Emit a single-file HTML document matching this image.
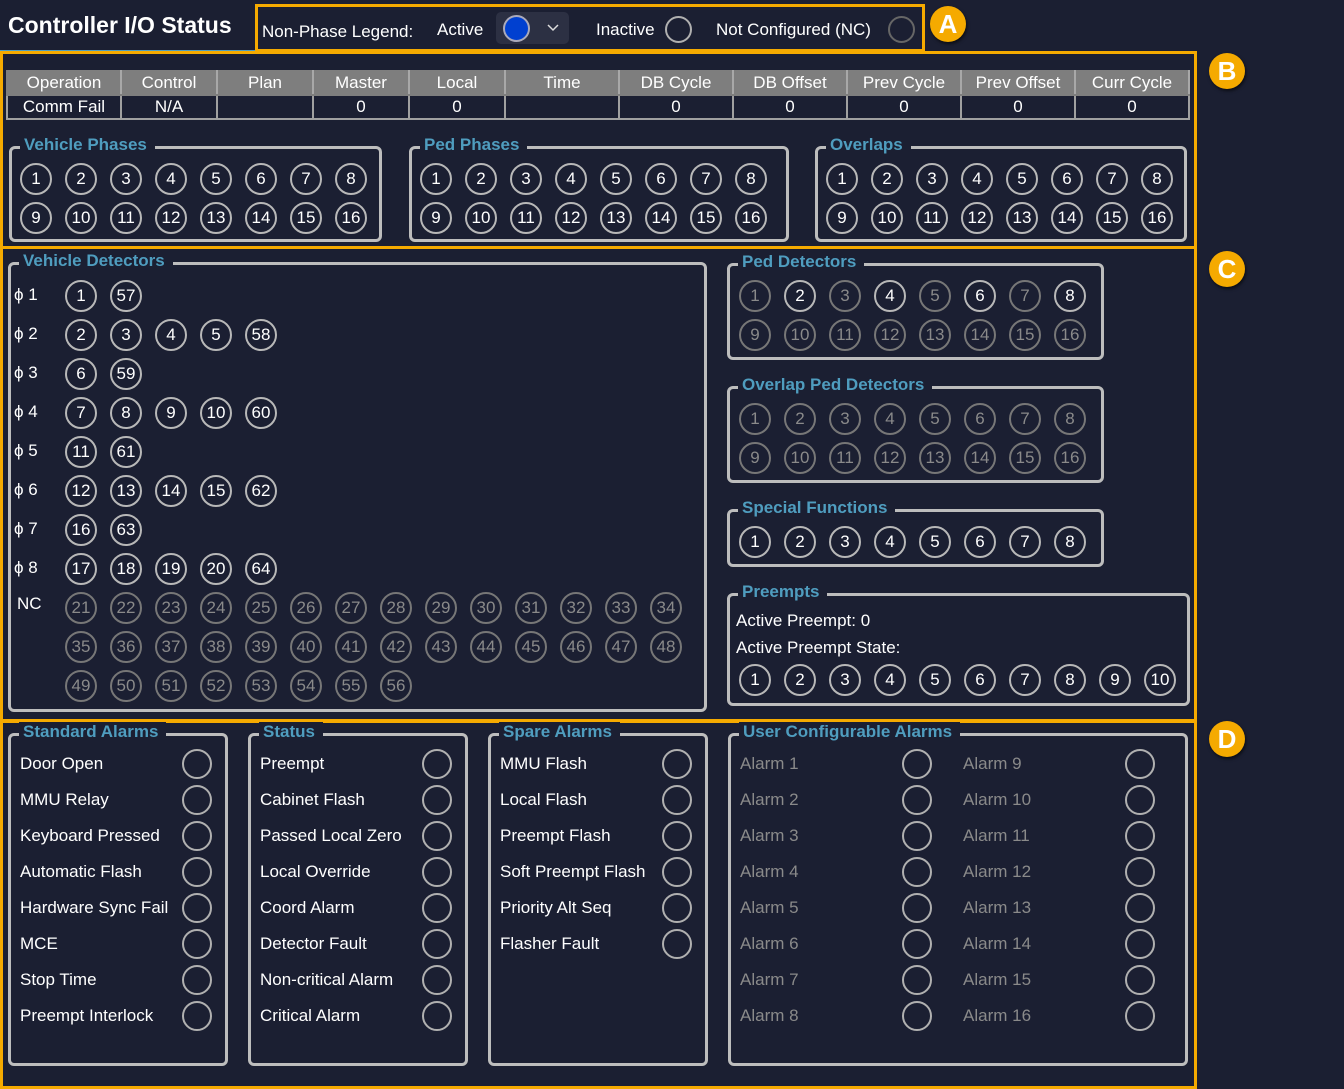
<!DOCTYPE html>
<html><head><meta charset="utf-8"><style>
*{box-sizing:border-box;margin:0;padding:0}
body{width:1344px;height:1083px;background:#1b1f32;font-family:"Liberation Sans",sans-serif;color:#fff;position:relative;overflow:hidden}
.a{position:absolute}
.ob{position:absolute;border:3px solid #f5aa00}
.g{position:absolute;border:3px solid #bdbdbd;border-radius:6px}
.t{position:absolute;top:-14px;left:8px;background:#1b1f32;padding:0 8px 0 4px;color:#4f9dbf;font-weight:bold;font-size:17px;line-height:20px}
.r{position:absolute;display:flex;gap:13px}
.r span{width:32px;height:32px;border:2px solid #b8b8b8;border-radius:50%;text-align:center;line-height:28px;font-size:17px;color:#fff;flex:none}
.r span.n,.r.n span{border-color:#777;color:#8a8a8a}
.lbl{position:absolute;font-size:17px;line-height:20px}
.ci{position:absolute;width:30px;height:30px;border:2px solid #b0b0b0;border-radius:50%}
.badge{position:absolute;width:36px;height:36px;border-radius:50%;background:#f5aa00;color:#fff;font-weight:bold;font-size:26px;text-align:center;line-height:36px;box-shadow:1px 2px 3px rgba(0,0,0,.6)}
table{position:absolute;left:6px;top:70px;border-collapse:collapse;font-size:17px}
td{border:2px solid #a0a0a0;text-align:center;height:24px;line-height:20px;padding:0}
tr.h td{background:#7e7e7e;color:#fff;border-color:#7e7e7e;border-right-color:#a8a8a8}
.gr{color:#8a8a8a}
</style></head><body>
<div class="a" style="left:8px;top:12px;font-size:23px;font-weight:bold">Controller I/O Status</div>
<div class="a" style="left:0;top:50px;width:545px;height:3px;background:#4f9dbf"></div>
<div class="ob" style="left:255px;top:4px;width:670px;height:48px"></div>
<div class="lbl" style="left:262px;top:22px">Non-Phase Legend:</div>
<div class="lbl" style="left:437px;top:20px">Active</div>
<div class="a" style="left:496px;top:12px;width:73px;height:32px;background:#2c3043;border-radius:5px"></div>
<div class="a" style="left:503px;top:15px;width:27px;height:27px;border-radius:50%;background:#0040d0;border:2px solid #aab"></div>
<svg class="a" style="left:547px;top:24px" width="12" height="8"><path d="M1 1 L6 6 L11 1" stroke="#ddd" stroke-width="1.5" fill="none"/></svg>
<div class="lbl" style="left:596px;top:20px">Inactive</div>
<div class="ci" style="left:665px;top:16px;width:27px;height:27px"></div>
<div class="lbl" style="left:716px;top:20px">Not Configured (NC)</div>
<div class="ci" style="left:888px;top:16px;width:27px;height:27px;border-color:#666"></div>
<div class="badge" style="left:930px;top:6px">A</div>
<div class="badge" style="left:1209px;top:53px">B</div>
<div class="badge" style="left:1209px;top:251px">C</div>
<div class="badge" style="left:1209px;top:721px">D</div>

<div class="ob" style="left:0;top:51px;width:1197px;height:198px"></div>
<div class="ob" style="left:0;top:246px;width:1197px;height:477px"></div>
<div class="ob" style="left:0;top:719px;width:1197px;height:370px"></div>

<table>
<tr class="h"><td style="width:114px">Operation</td><td style="width:96px">Control</td><td style="width:96px">Plan</td><td style="width:96px">Master</td><td style="width:96px">Local</td><td style="width:114px">Time</td><td style="width:114px">DB Cycle</td><td style="width:114px">DB Offset</td><td style="width:114px">Prev Cycle</td><td style="width:114px">Prev Offset</td><td style="width:114px">Curr Cycle</td></tr>
<tr><td>Comm Fail</td><td>N/A</td><td></td><td>0</td><td>0</td><td></td><td>0</td><td>0</td><td>0</td><td>0</td><td>0</td></tr>
</table>

<div class="g" style="left:9px;top:146px;width:373px;height:96px"><div class="t">Vehicle Phases</div></div>
<div class="r" style="left:20px;top:163px"><span>1</span><span>2</span><span>3</span><span>4</span><span>5</span><span>6</span><span>7</span><span>8</span></div>
<div class="r" style="left:20px;top:202px"><span>9</span><span>10</span><span>11</span><span>12</span><span>13</span><span>14</span><span>15</span><span>16</span></div>
<div class="g" style="left:409px;top:146px;width:380px;height:96px"><div class="t">Ped Phases</div></div>
<div class="r" style="left:420px;top:163px"><span>1</span><span>2</span><span>3</span><span>4</span><span>5</span><span>6</span><span>7</span><span>8</span></div>
<div class="r" style="left:420px;top:202px"><span>9</span><span>10</span><span>11</span><span>12</span><span>13</span><span>14</span><span>15</span><span>16</span></div>
<div class="g" style="left:815px;top:146px;width:372px;height:96px"><div class="t">Overlaps</div></div>
<div class="r" style="left:826px;top:163px"><span>1</span><span>2</span><span>3</span><span>4</span><span>5</span><span>6</span><span>7</span><span>8</span></div>
<div class="r" style="left:826px;top:202px"><span>9</span><span>10</span><span>11</span><span>12</span><span>13</span><span>14</span><span>15</span><span>16</span></div>

<div class="g" style="left:8px;top:262px;width:699px;height:450px"><div class="t">Vehicle Detectors</div></div>
<div class="lbl" style="left:14px;top:285px">ϕ 1</div>
<div class="r" style="left:65px;top:280px"><span>1</span><span>57</span></div>
<div class="lbl" style="left:14px;top:324px">ϕ 2</div>
<div class="r" style="left:65px;top:319px"><span>2</span><span>3</span><span>4</span><span>5</span><span>58</span></div>
<div class="lbl" style="left:14px;top:363px">ϕ 3</div>
<div class="r" style="left:65px;top:358px"><span>6</span><span>59</span></div>
<div class="lbl" style="left:14px;top:402px">ϕ 4</div>
<div class="r" style="left:65px;top:397px"><span>7</span><span>8</span><span>9</span><span>10</span><span>60</span></div>
<div class="lbl" style="left:14px;top:441px">ϕ 5</div>
<div class="r" style="left:65px;top:436px"><span>11</span><span>61</span></div>
<div class="lbl" style="left:14px;top:480px">ϕ 6</div>
<div class="r" style="left:65px;top:475px"><span>12</span><span>13</span><span>14</span><span>15</span><span>62</span></div>
<div class="lbl" style="left:14px;top:519px">ϕ 7</div>
<div class="r" style="left:65px;top:514px"><span>16</span><span>63</span></div>
<div class="lbl" style="left:14px;top:558px">ϕ 8</div>
<div class="r" style="left:65px;top:553px"><span>17</span><span>18</span><span>19</span><span>20</span><span>64</span></div>
<div class="lbl" style="left:17px;top:594px">NC</div>
<div class="r n" style="left:65px;top:592px"><span>21</span><span>22</span><span>23</span><span>24</span><span>25</span><span>26</span><span>27</span><span>28</span><span>29</span><span>30</span><span>31</span><span>32</span><span>33</span><span>34</span></div>
<div class="r n" style="left:65px;top:631px"><span>35</span><span>36</span><span>37</span><span>38</span><span>39</span><span>40</span><span>41</span><span>42</span><span>43</span><span>44</span><span>45</span><span>46</span><span>47</span><span>48</span></div>
<div class="r n" style="left:65px;top:670px"><span>49</span><span>50</span><span>51</span><span>52</span><span>53</span><span>54</span><span>55</span><span>56</span></div>

<div class="g" style="left:727px;top:263px;width:377px;height:97px"><div class="t">Ped Detectors</div></div>
<div class="r" style="left:739px;top:280px"><span class="n">1</span><span>2</span><span class="n">3</span><span>4</span><span class="n">5</span><span>6</span><span class="n">7</span><span>8</span></div>
<div class="r n" style="left:739px;top:319px"><span>9</span><span>10</span><span>11</span><span>12</span><span>13</span><span>14</span><span>15</span><span>16</span></div>
<div class="g" style="left:727px;top:386px;width:377px;height:97px"><div class="t">Overlap Ped Detectors</div></div>
<div class="r n" style="left:739px;top:403px"><span>1</span><span>2</span><span>3</span><span>4</span><span>5</span><span>6</span><span>7</span><span>8</span></div>
<div class="r n" style="left:739px;top:442px"><span>9</span><span>10</span><span>11</span><span>12</span><span>13</span><span>14</span><span>15</span><span>16</span></div>
<div class="g" style="left:727px;top:509px;width:377px;height:58px"><div class="t">Special Functions</div></div>
<div class="r" style="left:739px;top:526px"><span>1</span><span>2</span><span>3</span><span>4</span><span>5</span><span>6</span><span>7</span><span>8</span></div>
<div class="g" style="left:727px;top:593px;width:463px;height:113px"><div class="t">Preempts</div></div>
<div class="lbl" style="left:736px;top:611px">Active Preempt: 0</div>
<div class="lbl" style="left:736px;top:638px">Active Preempt State:</div>
<div class="r" style="left:739px;top:664px"><span>1</span><span>2</span><span>3</span><span>4</span><span>5</span><span>6</span><span>7</span><span>8</span><span>9</span><span>10</span></div>

<div class="g" style="left:8px;top:733px;width:220px;height:333px"><div class="t">Standard Alarms</div></div>
<div class="g" style="left:248px;top:733px;width:220px;height:333px"><div class="t">Status</div></div>
<div class="g" style="left:488px;top:733px;width:220px;height:333px"><div class="t">Spare Alarms</div></div>
<div class="g" style="left:728px;top:733px;width:460px;height:333px"><div class="t">User Configurable Alarms</div></div>

<div class="lbl" style="left:20px;top:754px">Door Open</div><div class="ci" style="left:182px;top:749px"></div>
<div class="lbl" style="left:20px;top:790px">MMU Relay</div><div class="ci" style="left:182px;top:785px"></div>
<div class="lbl" style="left:20px;top:826px">Keyboard Pressed</div><div class="ci" style="left:182px;top:821px"></div>
<div class="lbl" style="left:20px;top:862px">Automatic Flash</div><div class="ci" style="left:182px;top:857px"></div>
<div class="lbl" style="left:20px;top:898px">Hardware Sync Fail</div><div class="ci" style="left:182px;top:893px"></div>
<div class="lbl" style="left:20px;top:934px">MCE</div><div class="ci" style="left:182px;top:929px"></div>
<div class="lbl" style="left:20px;top:970px">Stop Time</div><div class="ci" style="left:182px;top:965px"></div>
<div class="lbl" style="left:20px;top:1006px">Preempt Interlock</div><div class="ci" style="left:182px;top:1001px"></div>

<div class="lbl" style="left:260px;top:754px">Preempt</div><div class="ci" style="left:422px;top:749px"></div>
<div class="lbl" style="left:260px;top:790px">Cabinet Flash</div><div class="ci" style="left:422px;top:785px"></div>
<div class="lbl" style="left:260px;top:826px">Passed Local Zero</div><div class="ci" style="left:422px;top:821px"></div>
<div class="lbl" style="left:260px;top:862px">Local Override</div><div class="ci" style="left:422px;top:857px"></div>
<div class="lbl" style="left:260px;top:898px">Coord Alarm</div><div class="ci" style="left:422px;top:893px"></div>
<div class="lbl" style="left:260px;top:934px">Detector Fault</div><div class="ci" style="left:422px;top:929px"></div>
<div class="lbl" style="left:260px;top:970px">Non-critical Alarm</div><div class="ci" style="left:422px;top:965px"></div>
<div class="lbl" style="left:260px;top:1006px">Critical Alarm</div><div class="ci" style="left:422px;top:1001px"></div>

<div class="lbl" style="left:500px;top:754px">MMU Flash</div><div class="ci" style="left:662px;top:749px"></div>
<div class="lbl" style="left:500px;top:790px">Local Flash</div><div class="ci" style="left:662px;top:785px"></div>
<div class="lbl" style="left:500px;top:826px">Preempt Flash</div><div class="ci" style="left:662px;top:821px"></div>
<div class="lbl" style="left:500px;top:862px">Soft Preempt Flash</div><div class="ci" style="left:662px;top:857px"></div>
<div class="lbl" style="left:500px;top:898px">Priority Alt Seq</div><div class="ci" style="left:662px;top:893px"></div>
<div class="lbl" style="left:500px;top:934px">Flasher Fault</div><div class="ci" style="left:662px;top:929px"></div>

<div class="lbl gr" style="left:740px;top:754px">Alarm 1</div><div class="ci" style="left:902px;top:749px"></div>
<div class="lbl gr" style="left:740px;top:790px">Alarm 2</div><div class="ci" style="left:902px;top:785px"></div>
<div class="lbl gr" style="left:740px;top:826px">Alarm 3</div><div class="ci" style="left:902px;top:821px"></div>
<div class="lbl gr" style="left:740px;top:862px">Alarm 4</div><div class="ci" style="left:902px;top:857px"></div>
<div class="lbl gr" style="left:740px;top:898px">Alarm 5</div><div class="ci" style="left:902px;top:893px"></div>
<div class="lbl gr" style="left:740px;top:934px">Alarm 6</div><div class="ci" style="left:902px;top:929px"></div>
<div class="lbl gr" style="left:740px;top:970px">Alarm 7</div><div class="ci" style="left:902px;top:965px"></div>
<div class="lbl gr" style="left:740px;top:1006px">Alarm 8</div><div class="ci" style="left:902px;top:1001px"></div>
<div class="lbl gr" style="left:963px;top:754px">Alarm 9</div><div class="ci" style="left:1125px;top:749px"></div>
<div class="lbl gr" style="left:963px;top:790px">Alarm 10</div><div class="ci" style="left:1125px;top:785px"></div>
<div class="lbl gr" style="left:963px;top:826px">Alarm 11</div><div class="ci" style="left:1125px;top:821px"></div>
<div class="lbl gr" style="left:963px;top:862px">Alarm 12</div><div class="ci" style="left:1125px;top:857px"></div>
<div class="lbl gr" style="left:963px;top:898px">Alarm 13</div><div class="ci" style="left:1125px;top:893px"></div>
<div class="lbl gr" style="left:963px;top:934px">Alarm 14</div><div class="ci" style="left:1125px;top:929px"></div>
<div class="lbl gr" style="left:963px;top:970px">Alarm 15</div><div class="ci" style="left:1125px;top:965px"></div>
<div class="lbl gr" style="left:963px;top:1006px">Alarm 16</div><div class="ci" style="left:1125px;top:1001px"></div>
</body></html>
